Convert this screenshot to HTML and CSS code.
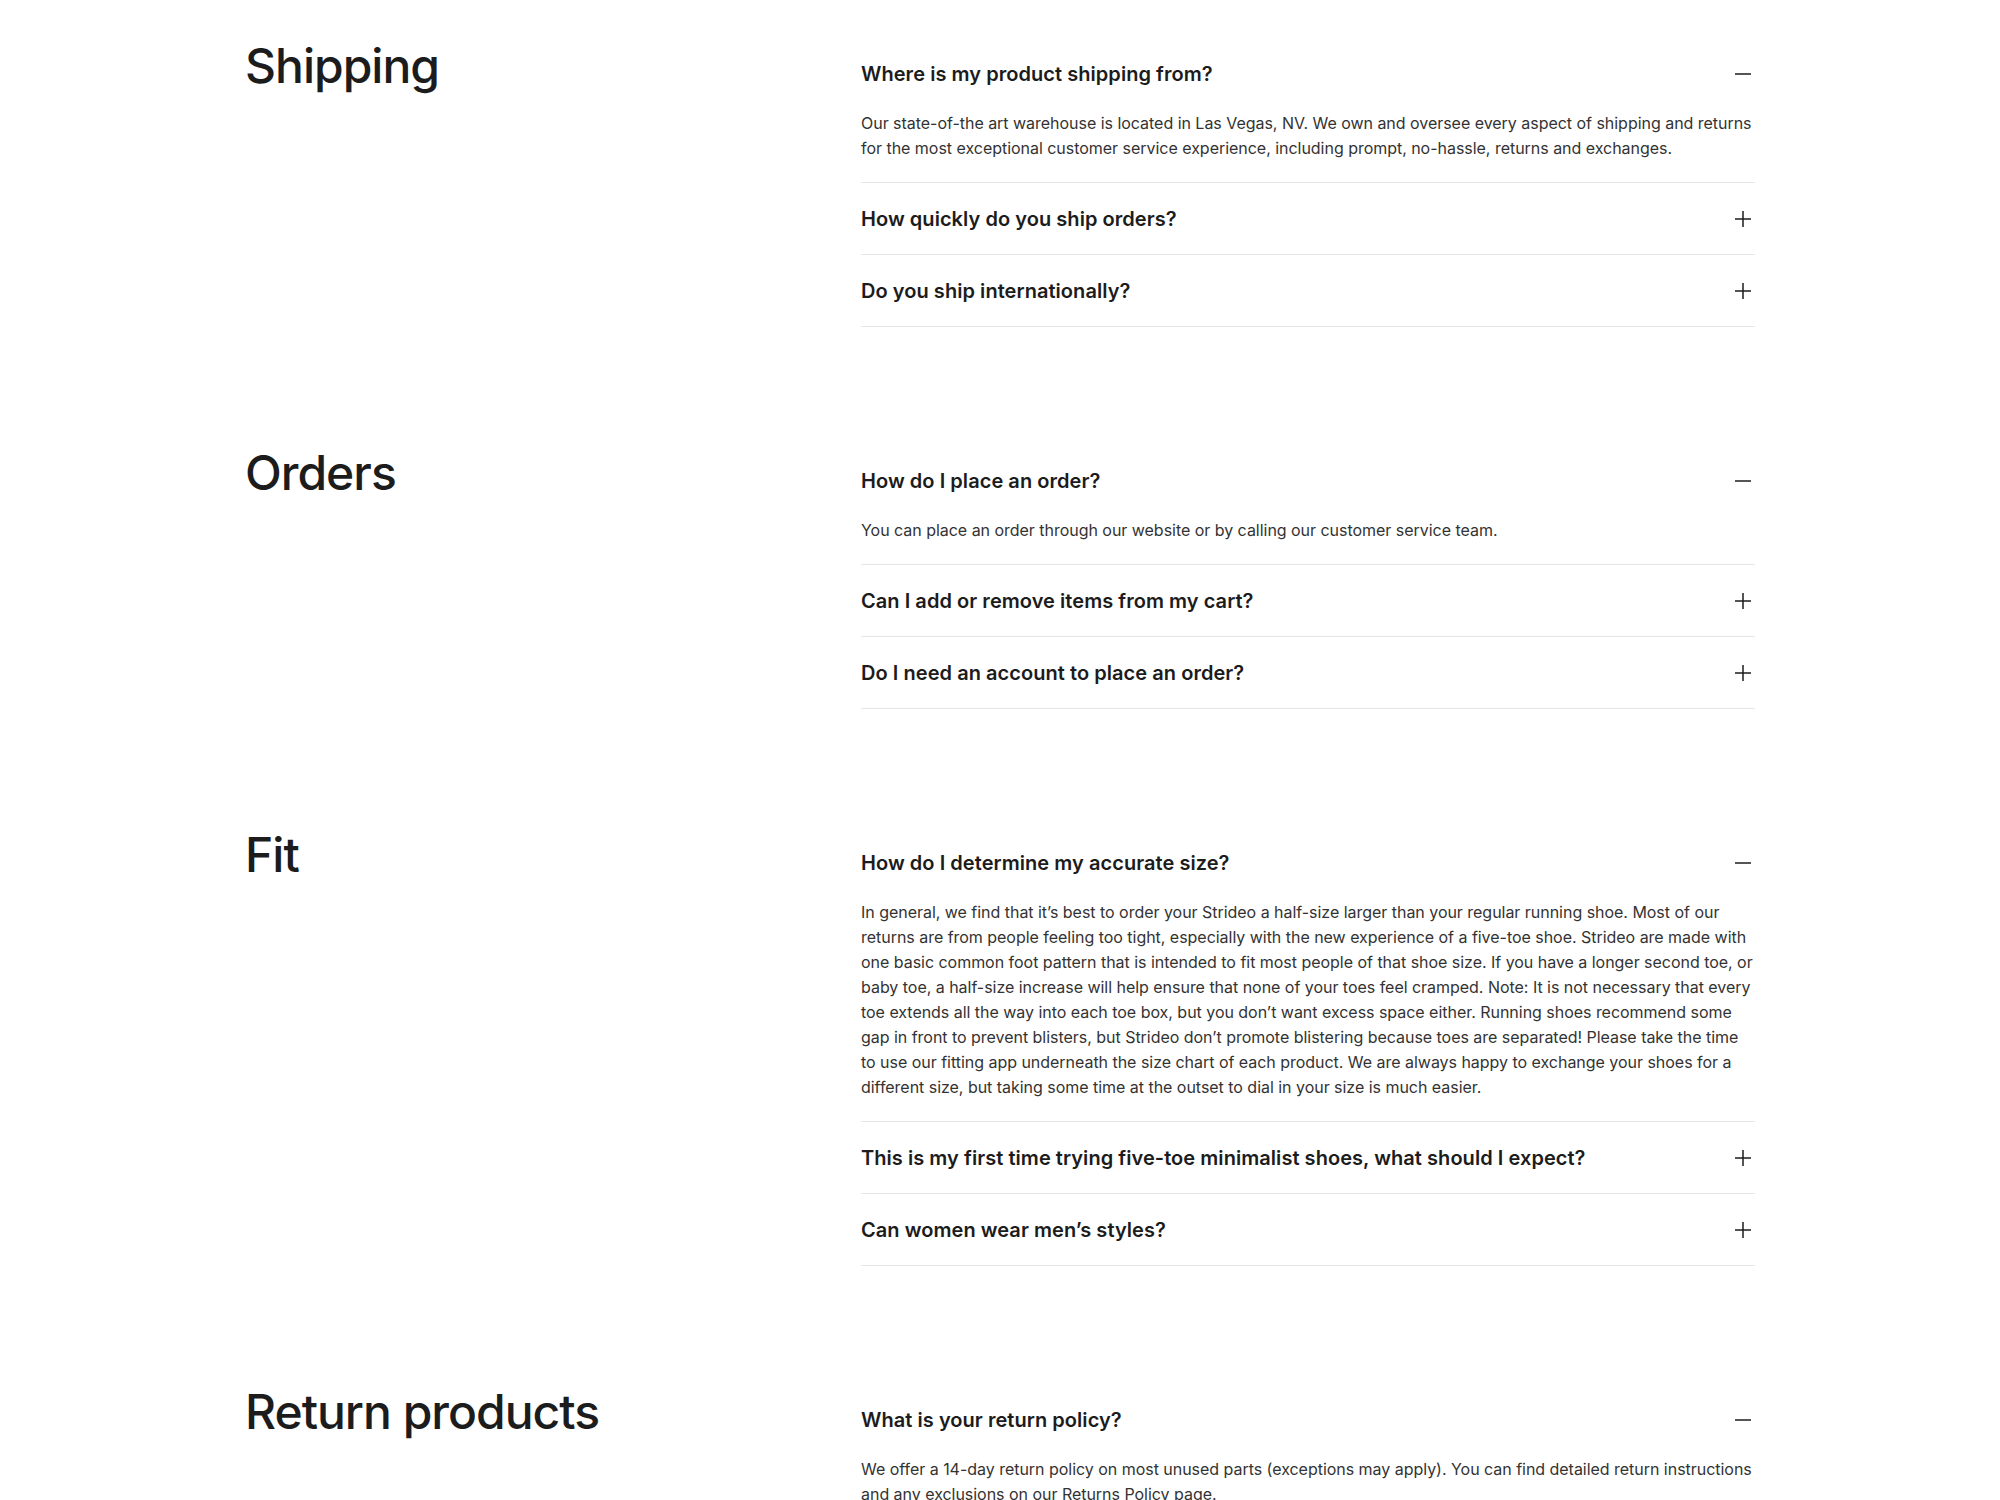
FILE: index.html
```html
<!DOCTYPE html>
<html lang="en">
<head>
    <meta charset="UTF-8">
    <meta name="viewport" content="width=device-width, initial-scale=1.0">
    <title>FAQ</title>
    <link rel="stylesheet" href="styles.css">
</head>
<body>
    <main class="faq">
        <section class="topic">
            <h2 class="topic-title">Shipping</h2>
            <div class="questions">
                <div class="item open">
                    <div class="question">
                        <span>Where is my product shipping from?</span>
                        <svg class="toggle" viewBox="0 0 18 18"><path d="M1 9h16"/></svg>
                    </div>
                    <p class="answer">Our state-of-the art warehouse is located in Las Vegas, NV. We own and oversee every aspect of shipping and returns for the most exceptional customer service experience, including prompt, no-hassle, returns and exchanges.</p>
                </div>
                <div class="item">
                    <div class="question">
                        <span>How quickly do you ship orders?</span>
                        <svg class="toggle" viewBox="0 0 18 18"><path d="M1 9h16M9 1v16"/></svg>
                    </div>
                </div>
                <div class="item">
                    <div class="question">
                        <span>Do you ship internationally?</span>
                        <svg class="toggle" viewBox="0 0 18 18"><path d="M1 9h16M9 1v16"/></svg>
                    </div>
                </div>
            </div>
        </section>

        <section class="topic">
            <h2 class="topic-title">Orders</h2>
            <div class="questions">
                <div class="item open">
                    <div class="question">
                        <span>How do I place an order?</span>
                        <svg class="toggle" viewBox="0 0 18 18"><path d="M1 9h16"/></svg>
                    </div>
                    <p class="answer">You can place an order through our website or by calling our customer service team.</p>
                </div>
                <div class="item">
                    <div class="question">
                        <span>Can I add or remove items from my cart?</span>
                        <svg class="toggle" viewBox="0 0 18 18"><path d="M1 9h16M9 1v16"/></svg>
                    </div>
                </div>
                <div class="item">
                    <div class="question">
                        <span>Do I need an account to place an order?</span>
                        <svg class="toggle" viewBox="0 0 18 18"><path d="M1 9h16M9 1v16"/></svg>
                    </div>
                </div>
            </div>
        </section>

        <section class="topic">
            <h2 class="topic-title">Fit</h2>
            <div class="questions">
                <div class="item open">
                    <div class="question">
                        <span>How do I determine my accurate size?</span>
                        <svg class="toggle" viewBox="0 0 18 18"><path d="M1 9h16"/></svg>
                    </div>
                    <p class="answer">In general, we find that it’s best to order your Strideo a half-size larger than your regular running shoe. Most of our returns are from people feeling too tight, especially with the new experience of a five-toe shoe. Strideo are made with one basic common foot pattern that is intended to fit most people of that shoe size. If you have a longer second toe, or baby toe, a half-size increase will help ensure that none of your toes feel cramped. Note: It is not necessary that every toe extends all the way into each toe box, but you don’t want excess space either. Running shoes recommend some gap in front to prevent blisters, but Strideo don’t promote blistering because toes are separated! Please take the time to use our fitting app underneath the size chart of each product. We are always happy to exchange your shoes for a different size, but taking some time at the outset to dial in your size is much easier.</p>
                </div>
                <div class="item">
                    <div class="question">
                        <span>This is my first time trying five-toe minimalist shoes, what should I expect?</span>
                        <svg class="toggle" viewBox="0 0 18 18"><path d="M1 9h16M9 1v16"/></svg>
                    </div>
                </div>
                <div class="item">
                    <div class="question">
                        <span>Can women wear men’s styles?</span>
                        <svg class="toggle" viewBox="0 0 18 18"><path d="M1 9h16M9 1v16"/></svg>
                    </div>
                </div>
            </div>
        </section>

        <section class="topic">
            <h2 class="topic-title">Return products</h2>
            <div class="questions">
                <div class="item open">
                    <div class="question">
                        <span>What is your return policy?</span>
                        <svg class="toggle" viewBox="0 0 18 18"><path d="M1 9h16"/></svg>
                    </div>
                    <p class="answer">We offer a 14-day return policy on most unused parts (exceptions may apply). You can find detailed return instructions and any exclusions on our Returns Policy page.</p>
                </div>
            </div>
        </section>
    </main>
</body>
</html>
```

FILE: styles.css
```css
body {
    margin: 0;
    background: #fff;
    color: #1c1c1c;
    font-family: Inter, "Noto Sans", sans-serif;
}
.faq {
    width: 1510px;
    margin: 0 auto;
    padding-top: 38px;
    display: flex;
    flex-direction: column;
    gap: 118px;
}
.topic {
    display: grid;
    grid-template-columns: 616px 1fr;
}
.topic-title {
    margin: 0;
    font-size: 48px;
    line-height: 56px;
    font-weight: 500;
    letter-spacing: -1px;
}
.item {
    border-bottom: 1px solid #e6e6e6;
}
.question {
    display: flex;
    justify-content: space-between;
    align-items: center;
    height: 71px;
    font-size: 20px;
    font-weight: 600;
    letter-spacing: 0.05px;
}
.toggle {
    width: 18px;
    height: 18px;
    margin-right: 3px;
    fill: none;
    stroke: #1c1c1c;
    stroke-width: 1.5;
}
.answer {
    margin: 0;
    padding-top: 2px;
    padding-bottom: 21px;
    font-size: 16px;
    line-height: 25px;
    letter-spacing: -0.03px;
    color: #333;
}
```
